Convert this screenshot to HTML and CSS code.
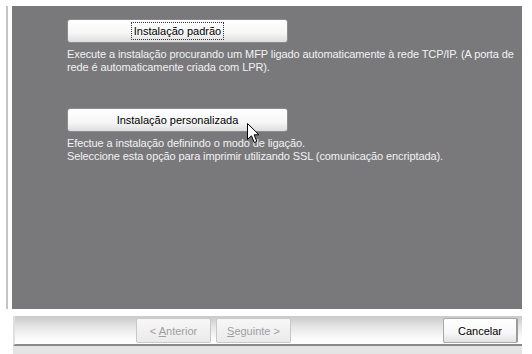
FILE: index.html
```html
<!DOCTYPE html>
<html>
<head>
<meta charset="utf-8">
<link rel="stylesheet" href="styles.css">
</head>
<body>
<div class="page">
  <div class="main">
    <div class="panel">
      <div class="option">
        <button class="big-btn"><span class="focus">Instalação padrão</span></button>
        <p class="desc">Execute a instalação procurando um MFP ligado automaticamente à rede TCP/IP. (A porta de<br>rede é automaticamente criada com LPR).</p>
      </div>
      <div class="option second">
        <button class="big-btn">Instalação personalizada</button>
        <p class="desc">Efectue a instalação definindo o modo de ligação.<br>Seleccione esta opção para imprimir utilizando SSL (comunicação encriptada).</p>
      </div>
      <svg class="cursor" width="13" height="21" viewBox="0 0 13 21">
        <path d="M0.5 0.5 L0.5 16.5 L4.5 12.8 L7.2 19.5 L9.8 18.4 L7.1 11.8 L12 11.8 Z" fill="#fff" stroke="#000" stroke-width="1" stroke-linejoin="miter"/>
      </svg>
    </div>
  </div>
  <div class="footer-wrap">
    <div class="footer">
      <div class="nav">
        <button class="btn disabled">&lt; <u>A</u>nterior</button>
        <button class="btn disabled"><u>S</u>eguinte &gt;</button>
      </div>
      <button class="btn cancel">Cancelar</button>
    </div>
  </div>
  <div class="bottom-strip"></div>
</div>
</body>
</html>
```
FILE: styles.css
```css
* { box-sizing: border-box; }
html, body { margin: 0; padding: 0; background: #fff; }
body {
  font-family: "Liberation Sans", Arial, sans-serif;
  font-size: 11px;
}
.page {
  width: 532px;
  height: 354px;
  display: flex;
  flex-direction: column;
  overflow: hidden;
}
.main {
  margin-top: 6px;
  margin-left: 6px;
  border-left: 2px solid #c4c4c4;
  padding-left: 4px;
  height: 303px;
  display: flex;
}
.panel {
  position: relative;
  width: 510px;
  height: 303px;
  background: #79797c;
  padding: 13px 0 0 55px;
}
.option { display: flex; flex-direction: column; }
.option.second { margin-top: 34px; }
.big-btn {
  width: 221px;
  height: 24px;
  font-family: inherit;
  font-size: 11px;
  color: #000;
  border: 1px solid #8c8c8c;
  border-radius: 3px;
  background: linear-gradient(#ffffff 0%, #f6f6f6 60%, #dedede 100%);
  display: flex;
  align-items: center;
  justify-content: center;
  padding: 0;
}
.focus {
  outline: 1px dotted #333;
  outline-offset: 1px;
  padding: 0 1px;
  line-height: 14px;
}
.desc {
  margin: 5px 0 0 0;
  color: #f2f2f2;
  line-height: 13px;
  font-size: 11px;
  letter-spacing: -0.1px;
}
.cursor {
  position: absolute;
  left: 235px;
  top: 117px;
}
.footer-wrap {
  margin-top: 7px;
  padding-left: 13px;
  padding-right: 10px;
}
.footer {
  height: 30px;
  background: linear-gradient(#c9c9c9 0%, #e6e6e6 40%, #fbfbfb 80%, #ffffff 100%);
  border-bottom: 2px solid #8a8a8a;
  border-left: 2px solid #e0e0e0;
  display: flex;
  align-items: flex-start;
  padding-top: 2px;
  padding-left: 121px;
  padding-right: 4px;
}
.nav { display: flex; gap: 5px; }
.btn {
  width: 75px;
  height: 25px;
  font-family: inherit;
  font-size: 11px;
  border-radius: 2px;
  padding: 0;
}
.btn u { text-decoration: underline; }
.btn.disabled {
  color: #9e9e9e;
  border: 1px solid #c8c8c8;
  background: linear-gradient(#f7f7f7, #ebebeb);
}
.btn.cancel {
  margin-left: auto;
  color: #000;
  border: 1px solid #a9a9a9;
  border-right: 2px solid #9a9a9a;
  background: linear-gradient(#ffffff 0%, #f7f7f7 60%, #e2e2e2 100%);
}
.bottom-strip {
  margin-top: 0;
  margin-left: 13px;
  margin-right: 10px;
  height: 8px;
  background: #e4e4e4;
}
```
